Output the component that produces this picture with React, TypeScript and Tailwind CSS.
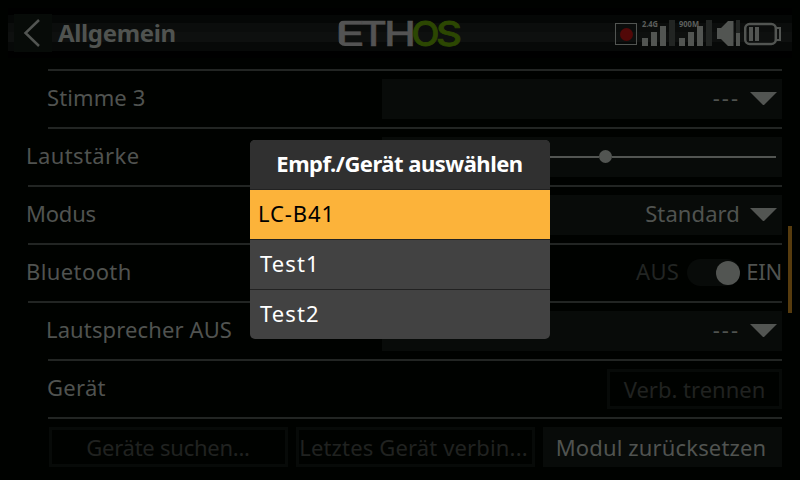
import React from "react";

function Label({ children, className = "" }: { children: React.ReactNode; className?: string }) {
  return <span className={`whitespace-pre text-[22px] ${className}`}>{children}</span>;
}

function Row({ inset, children }: { inset: boolean; children: React.ReactNode }) {
  return (
    <div className="h-[58px]">
      <div className={`h-0.5 bg-[#222523] ${inset ? "ml-5" : ""}`} />
      <div className="mt-2 flex h-10 justify-between leading-[37px]">{children}</div>
    </div>
  );
}

function Select({ value, className }: { value: string; className: string }) {
  return (
    <div className="flex h-10 w-[400px] justify-end bg-[#080b09] pr-[5px]">
      <Label className={className}>{value}</Label>
      <svg className="mt-[13px] ml-[10px]" width="27" height="13" viewBox="0 0 27 13">
        <path d="M0 0h27L13.5 13.5z" fill="#525552" />
      </svg>
    </div>
  );
}

function Logo() {
  return (
    <svg
      width="126"
      height="69"
      viewBox="336 0 126 69"
      fontFamily="Inter, sans-serif"
      fontWeight="500"
      fontSize="34.4"
    >
      <defs>
        <clipPath id="soft-left">
          <rect x="338" y="20" width="40" height="26" rx="7" />
        </clipPath>
      </defs>
      <g fill="#535353" stroke="#535353" strokeWidth="0.4">
        <g clipPath="url(#soft-left)">
          <text x="335" y="46" textLength="30" lengthAdjust="spacingAndGlyphs">E</text>
        </g>
        <text x="360" y="46" textLength="27" lengthAdjust="spacingAndGlyphs">T</text>
        <text x="384" y="46" textLength="32" lengthAdjust="spacingAndGlyphs">H</text>
      </g>
      <g fill="#2c4702" stroke="#2c4702" strokeWidth="0.8">
        <text x="411.5" y="46" textLength="28" lengthAdjust="spacingAndGlyphs">O</text>
        <text x="436" y="46" textLength="26" lengthAdjust="spacingAndGlyphs">S</text>
      </g>
    </svg>
  );
}

function Signal({ label, width }: { label: string; width: number }) {
  return (
    <svg className="mt-[14px] shrink-0" width="34" height="32" viewBox="0 -4 34 32">
      <path d="M0 20h6v8H0zM9 14h6v14H9zM18 8h6v20h-6z" fill="#525552" />
      <path d="M27 2h6v26h-6z" fill="#222523" />
      <text x="0" y="9" textLength={width} lengthAdjust="spacingAndGlyphs" fontSize="9.5" fontWeight="700" fontFamily="Noto Sans, sans-serif" fill="#5c5f5c">
        {label}
      </text>
    </svg>
  );
}

function StatusIcons() {
  return (
    <div className="flex">
      <svg className="mt-[23px] mr-[5px]" width="22" height="22" viewBox="0 0 22 22">
        <rect x="0.5" y="0.5" width="21" height="21" fill="none" stroke="#525552" />
        <circle cx="11.5" cy="11.5" r="6.5" fill="#520808" />
      </svg>
      <div className="mr-[3px] flex"><Signal label="2.4G" width={16} /></div>
      <div className="mr-1 flex"><Signal label="900M" width={20} /></div>
      <svg className="mt-5 mr-1" width="23" height="26" viewBox="717 20 23 26">
        <path d="M717 28h4l7-7h5.500v25H728l-7-7h-4z" fill="#525552" />
        <path d="M736 20h4v13h-4z" fill="#222523" />
        <path d="M736 33h4v13h-4z" fill="#525552" />
      </svg>
      <svg className="mt-[22px]" width="38" height="24" viewBox="744 22 38 24">
        <rect x="745.2" y="24" width="30.600" height="20" rx="4.500" fill="none" stroke="#525552" strokeWidth="2.500" />
        <path d="M776 28h4v12h-4" fill="none" stroke="#525552" strokeWidth="2" />
        <path d="M749 27h4v14h-4zM755 27h4v14h-4z" fill="#525552" />
      </svg>
    </div>
  );
}

function Header() {
  return (
    <header className="relative h-[69px]">
      <div className="absolute top-2 left-2 flex h-[50px] w-[784px] flex-col bg-black py-[7px]">
        <div className="h-2 bg-[#050706]" />
        <div className="h-[9px] bg-[#0b0d0c]" />
        <div className="h-[10px] bg-[#0e100f]" />
        <div className="h-[9px] bg-[#070908]" />
      </div>
      <div className="relative flex h-full justify-between pr-[18px]">
        <div className="flex w-[336px] pl-[14px]">
          <div className="mt-[14px] flex h-[38px] w-[38px] bg-[#070b08]">
            <svg width="38" height="38" viewBox="14 14 38 38" fill="none">
              <path d="M39 20L25.500 33L39 46" stroke="#525552" strokeWidth="2.500" />
            </svg>
          </div>
          <Label className="mt-[13px] ml-[6px] text-[24px] leading-[40px] font-bold tracking-[-0.35px]">Allgemein</Label>
        </div>
        <Logo />
        <div className="flex w-[320px] justify-end"><StatusIcons /></div>
      </div>
    </header>
  );
}

function Button({ label, width, active = false, text }: { label: string; width: string; active?: boolean; text: string }) {
  return (
    <div className={`flex h-10 items-center justify-center leading-[32px] ${width} ${active ? "bg-[#080b09]" : "border-3 border-[#070a08] text-[#202220]"}`}>
      <Label className={text}>{label}</Label>
    </div>
  );
}

function Dialog() {
  return (
    <div className="absolute top-[140px] left-[250px] h-[199px] w-[300px] divide-y divide-[#222] overflow-hidden rounded-[5px] bg-[#424242] leading-[39px] text-white">
      <div className="flex h-[50px] justify-center bg-[#303030] pt-1">
        <Label className="-ml-px font-bold tracking-[-0.5px]">Empf./Gerät auswählen</Label>
      </div>
      <div className="flex h-[50px] bg-[#fcb33a] pt-1 pl-2 text-black">
        <Label className="tracking-[0.9px]">LC-B41</Label>
      </div>
      <div className="flex h-[50px] pt-1 pl-[10px]"><Label className="tracking-[1.1px]">Test1</Label></div>
      <div className="flex h-[49px] pt-1 pl-[10px]"><Label className="tracking-[1.1px]">Test2</Label></div>
    </div>
  );
}

export default function App() {
  return (
    <div className="relative h-[480px] w-[800px] overflow-hidden bg-[#000200] font-['Noto_Sans',sans-serif] text-[#505350]">
      <Header />
      <div className="flex justify-between pr-2 pl-7">
        <main className="w-[754px]">
          <Row inset>
            <Label className="pl-[19px] tracking-[0.1px]">Stimme 3</Label>
            <Select value="---" className="tracking-[2px]" />
          </Row>
          <Row inset>
            <Label className="-ml-[2px] tracking-[0.4px]">Lautstärke</Label>
            <div className="flex h-10 w-[400px] items-center bg-[#080b09] px-[6px]">
              <div className="h-0.5 w-[211px] bg-[#525552]" />
              <div className="-mt-px size-[13px] shrink-0 rounded-full bg-[#525552]" />
              <div className="h-0.5 flex-1 bg-[#525552]" />
            </div>
          </Row>
          <Row inset={false}>
            <Label className="-ml-[2px] tracking-[-0.2px]">Modus</Label>
            <Select value="Standard" className="tracking-[0.1px]" />
          </Row>
          <Row inset={false}>
            <Label className="-ml-[2px] tracking-[0.4px]">Bluetooth</Label>
            <div className="flex">
              <Label className="tracking-[0.3px] text-[#222523]">AUS</Label>
              <div className="mt-[6px] ml-2 flex h-[27px] w-[53px] items-center justify-end rounded-full bg-[#080b09]">
                <div className="size-6 rounded-full bg-[#525552]" />
              </div>
              <Label className="ml-[6px] tracking-[-0.2px]">EIN</Label>
            </div>
          </Row>
          <Row inset={false}>
            <Label className="pl-[18px] tracking-[0.12px]">Lautsprecher AUS</Label>
            <Select value="---" className="tracking-[2px]" />
          </Row>
          <Row inset>
            <Label className="pl-[19px] tracking-[0.3px]">Gerät</Label>
            <Button label="Verb. trennen" width="w-[175px]" text="tracking-[0px]" />
          </Row>
          <Row inset>
            <div className="ml-[21px] flex gap-2">
              <Button label="Geräte suchen..." width="w-[239px]" text="-ml-px tracking-[-0.25px]" />
              <Button label="Letztes Gerät verbin..." width="w-[239px]" text="tracking-[0.15px] -ml-1" />
              <Button label="Modul zurücksetzen" width="w-[239px]" active text="tracking-[0.15px] -ml-[3px]" />
            </div>
          </Row>
        </main>
        <div className="mt-[157px] h-[87px] w-1 bg-[#573c0e]" />
      </div>
      <Dialog />
    </div>
  );
}
